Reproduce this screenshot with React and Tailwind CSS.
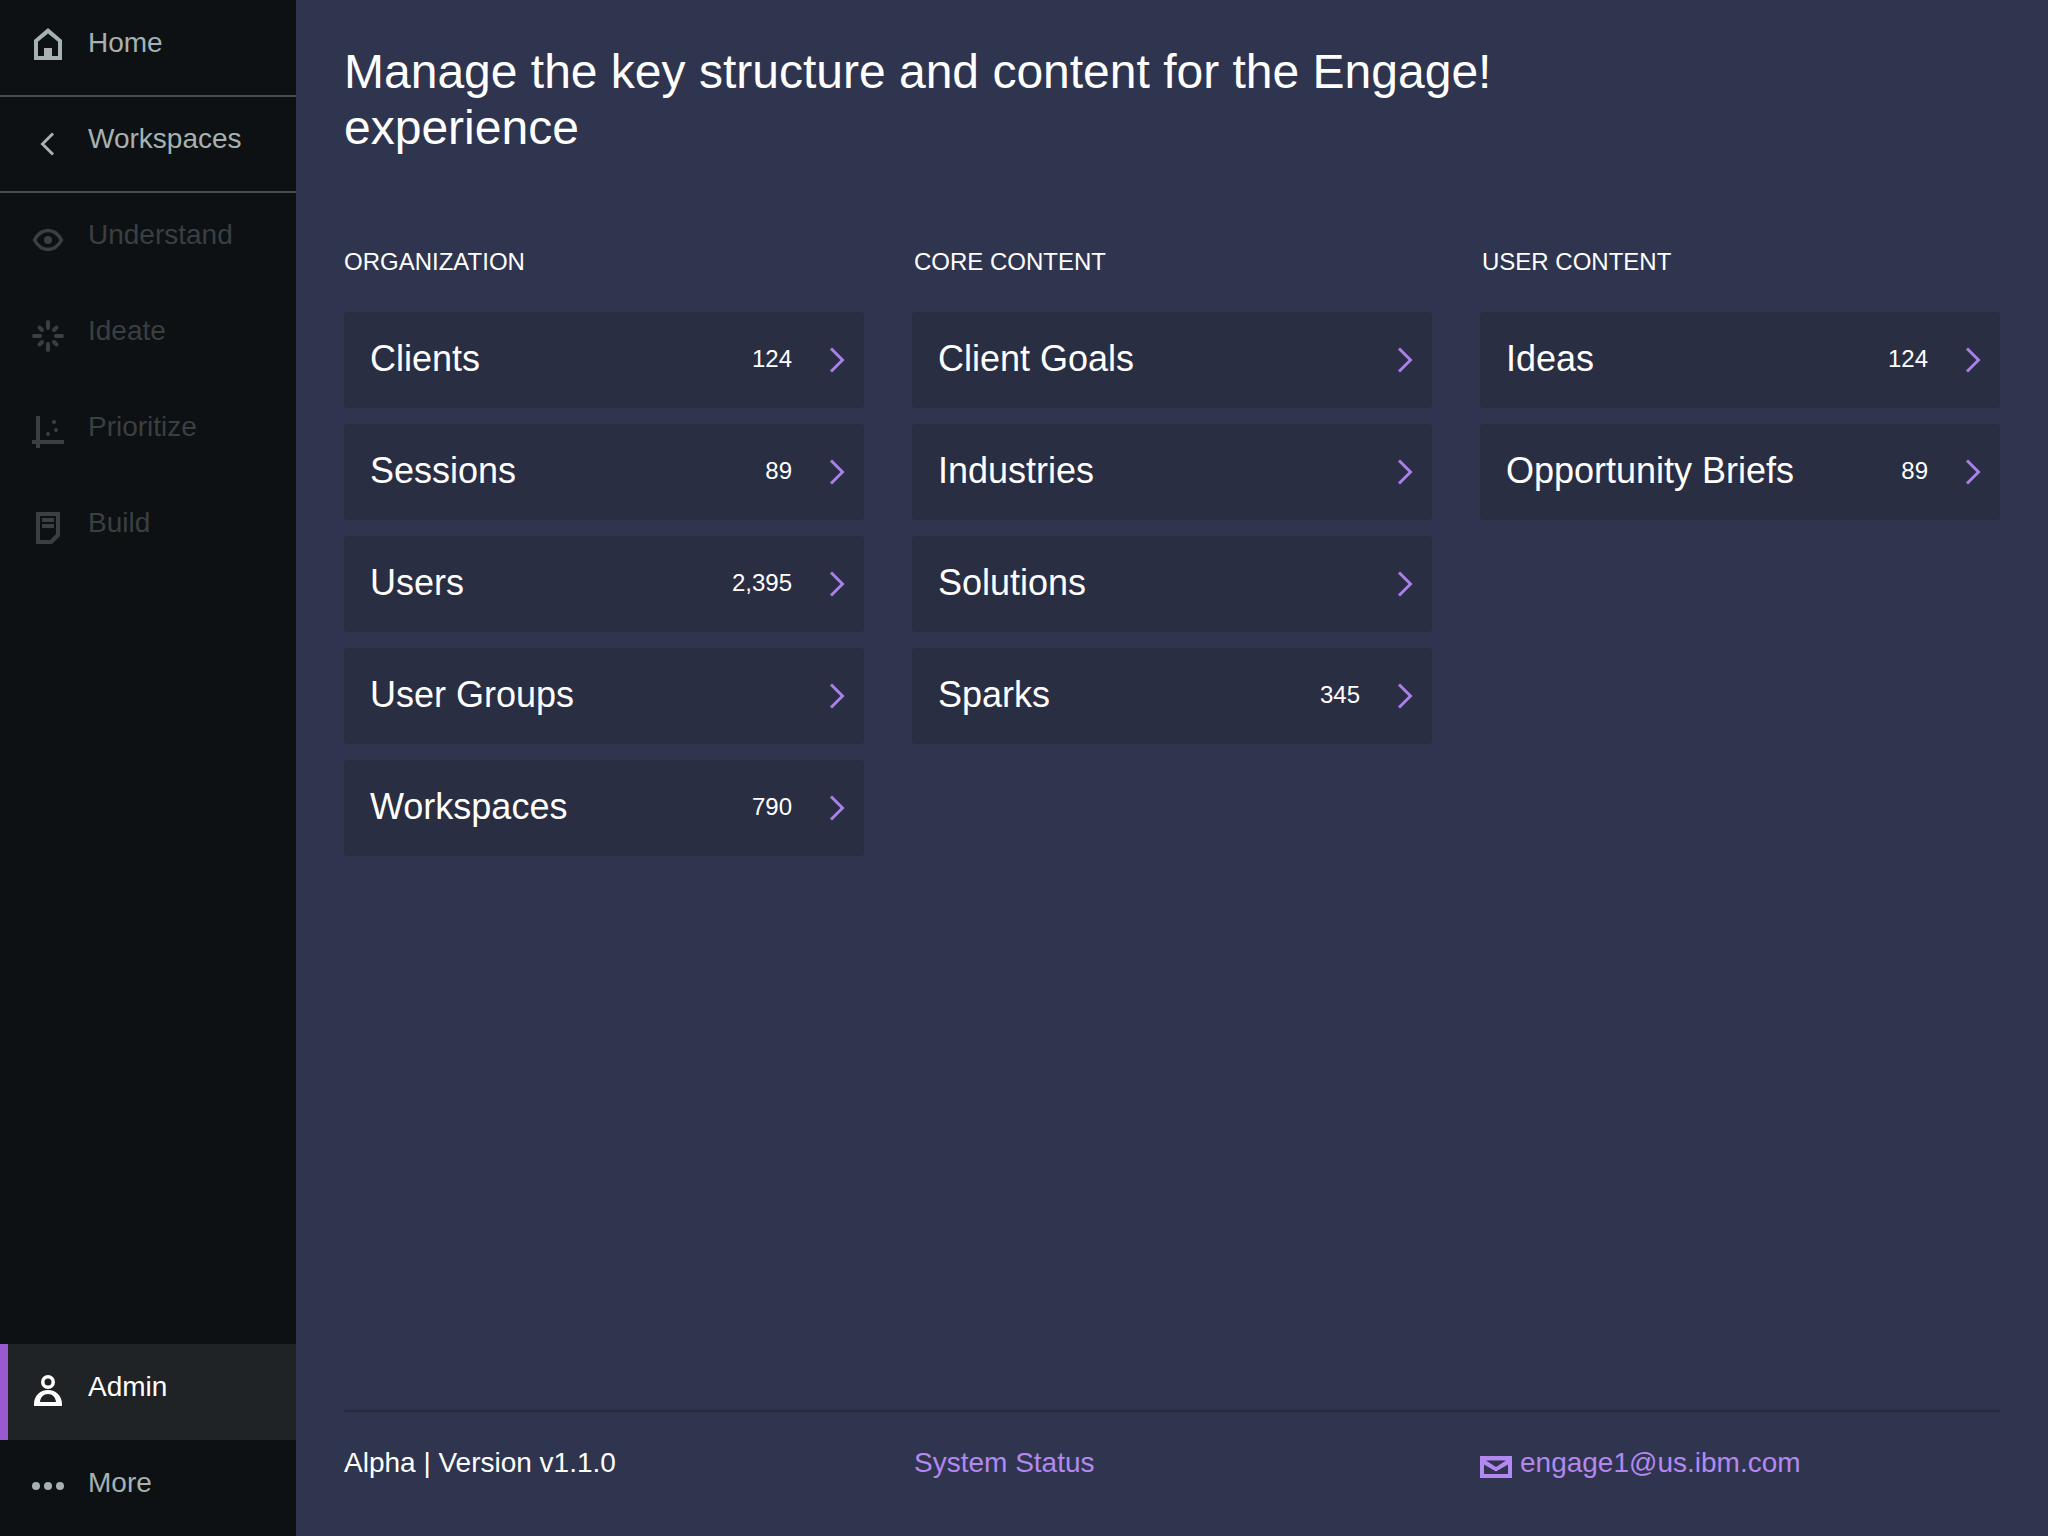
import React from "react";

const font = "font-['Liberation_Sans',Arial,sans-serif]";

const HomeIcon = () => (
  <svg width="32" height="32" viewBox="0 0 32 32" className="-mt-2">
    <path
      fill="currentColor"
      fillRule="evenodd"
      d="M16 0 L30 12 V32 H2 V12 Z M16 5.5 L26 13.8 V28 H20 V20 H12 V28 H6 V13.8 Z"
    />
  </svg>
);

const BackIcon = () => (
  <svg width="32" height="32" viewBox="0 0 32 32">
    <path d="M21 5.5 L10.5 16 L21 26.5" fill="none" stroke="currentColor" strokeWidth="3" />
  </svg>
);

const EyeIcon = () => (
  <svg width="32" height="32" viewBox="0 0 32 32">
    <path
      d="M2.5 16 C6 9.5 10.5 6.5 16 6.5 C21.5 6.5 26 9.5 29.5 16 C26 22.5 21.5 25.5 16 25.5 C10.5 25.5 6 22.5 2.5 16 Z"
      fill="none"
      stroke="currentColor"
      strokeWidth="3.5"
    />
    <circle cx="16" cy="16" r="4" fill="currentColor" />
  </svg>
);

const IdeateIcon = () => (
  <svg width="32" height="32" viewBox="0 0 32 32" stroke="currentColor" strokeWidth="4" strokeLinecap="round">
    <path d="M16 2 V8 M16 24 V30 M2 16 H8 M24 16 H30" />
    <path d="M7.5 7.5 L10 10 M22 22 L24.5 24.5 M7.5 24.5 L10 22 M22 10 L24.5 7.5" />
  </svg>
);

const PrioritizeIcon = () => (
  <svg width="32" height="32" viewBox="0 0 32 32" fill="currentColor">
    <rect x="4" y="0" width="4" height="32" />
    <rect x="0" y="24" width="32" height="4" />
    <circle cx="22" cy="6" r="2" />
    <circle cx="24" cy="14" r="2" />
    <circle cx="16" cy="18" r="2" />
  </svg>
);

const BuildIcon = () => (
  <svg width="32" height="32" viewBox="0 0 32 32" fill="currentColor">
    <path fillRule="evenodd" d="M4 0 H28 V24 L20 32 H4 Z M8 4 V28 H18 L24 22 V4 Z" />
    <rect x="10" y="6" width="12" height="4" />
    <rect x="10" y="12" width="12" height="4" />
  </svg>
);

const AdminIcon = () => (
  <svg width="32" height="32" viewBox="0 0 32 32" className="-mt-1" fill="currentColor">
    <circle cx="16" cy="8" r="5.25" fill="none" stroke="currentColor" strokeWidth="3.5" />
    <path
      fillRule="evenodd"
      d="M2 32 V30 C2 22 8 16 16 16 C24 16 30 22 30 30 V32 Z M8 28 H24 C23.5 23 20.5 20 16 20 C11.5 20 8.5 23 8 28 Z"
    />
  </svg>
);

const MoreIcon = () => (
  <svg width="32" height="32" viewBox="0 0 32 32" className="-mt-1" fill="currentColor">
    <circle cx="4" cy="16" r="4" />
    <circle cx="16" cy="16" r="4" />
    <circle cx="28" cy="16" r="4" />
  </svg>
);

const ChevronRight = () => (
  <svg width="16" height="26" viewBox="0 0 16 26" className="shrink-0">
    <path d="M2 1.5 L13.5 13 L2 24.5" fill="none" stroke="#a77fe6" strokeWidth="3" />
  </svg>
);

const MailIcon = () => (
  <svg width="32" height="22" viewBox="0 0 32 22" className="shrink-0 mt-[11px]">
    <path
      fill="#b388f0"
      fillRule="evenodd"
      d="M0 0 H32 V22 H0 Z M4 8.5 V18 H28 V8.5 L16 15.5 Z M6 4.5 L16 11 L26 4.5 Z"
    />
  </svg>
);

function NavItem({ icon, label, pad = "pl-8" }) {
  return (
    <div className={`flex items-center h-24 ${pad} gap-6 text-[28px]`}>
      <span className="w-8 h-8 flex items-center justify-center shrink-0">{icon}</span>
      <span className="-mt-[10px] leading-8">{label}</span>
    </div>
  );
}

function Row({ label, count }) {
  return (
    <div className="flex items-center h-24 pl-[26px] pr-[19px] bg-[#2a2e43] rounded">
      <span className="flex-1 text-[36px] leading-10 text-white -mt-[3px]">{label}</span>
      {count && <span className="text-[24px] leading-8 text-white -mt-[3px]">{count}</span>}
      <span className="ml-[37px] flex">
        <ChevronRight />
      </span>
    </div>
  );
}

const columns = [
  {
    title: "ORGANIZATION",
    inset: "",
    rows: [
      { label: "Clients", count: "124" },
      { label: "Sessions", count: "89" },
      { label: "Users", count: "2,395" },
      { label: "User Groups" },
      { label: "Workspaces", count: "790" },
    ],
  },
  {
    title: "CORE CONTENT",
    inset: "pl-[2px]",
    rows: [
      { label: "Client Goals" },
      { label: "Industries" },
      { label: "Solutions" },
      { label: "Sparks", count: "345" },
    ],
  },
  {
    title: "USER CONTENT",
    inset: "pl-[2px]",
    rows: [
      { label: "Ideas", count: "124" },
      { label: "Opportunity Briefs", count: "89" },
    ],
  },
];

export default function App() {
  return (
    <div className={`flex h-[1536px] w-[2048px] overflow-hidden bg-[#30354f] ${font}`}>
      <aside className="w-[296px] shrink-0 flex flex-col bg-[#0d1113] text-[#a5b1b2]">
        <NavItem icon={<HomeIcon />} label="Home" />
        <div className="h-0.5 -my-px bg-[#4a4d4f]" />
        <NavItem icon={<BackIcon />} label="Workspaces" />
        <div className="h-0.5 -my-px bg-[#4a4d4f]" />
        <div className="text-[#3a3f42]">
          <NavItem icon={<EyeIcon />} label="Understand" />
          <NavItem icon={<IdeateIcon />} label="Ideate" />
          <NavItem icon={<PrioritizeIcon />} label="Prioritize" />
          <NavItem icon={<BuildIcon />} label="Build" />
        </div>
        <div className="mt-auto">
          <div className="border-l-8 border-[#9b59d0] bg-[#1f2325] text-white">
            <NavItem icon={<AdminIcon />} label="Admin" pad="pl-6" />
          </div>
          <NavItem icon={<MoreIcon />} label="More" />
        </div>
      </aside>

      <main className="flex-1 flex flex-col px-12">
        <h1 className="max-w-[1200px] mt-11 text-[48px] leading-14 text-white">
          Manage the key structure and content for the Engage! experience
        </h1>

        <div className="grid grid-cols-3 gap-12 mt-[90px]">
          {columns.map((col) => (
            <section key={col.title}>
              <h2 className={`text-[24px] leading-8 text-white ${col.inset}`}>{col.title}</h2>
              <div className="mt-[34px] flex flex-col gap-4">
                {col.rows.map((row) => (
                  <Row key={row.label} label={row.label} count={row.count} />
                ))}
              </div>
            </section>
          ))}
        </div>

        <footer className="mt-auto h-[126px] border-t-2 border-[#272b3e] grid grid-cols-3 gap-12 pt-[33px] text-[28px] leading-9">
          <span className="text-white">Alpha | Version v1.1.0</span>
          <span className="text-[#b388f0] pl-[2px]">System Status</span>
          <span className="flex gap-2 text-[#b388f0]">
            <MailIcon />
            engage1@us.ibm.com
          </span>
        </footer>
      </main>
    </div>
  );
}
